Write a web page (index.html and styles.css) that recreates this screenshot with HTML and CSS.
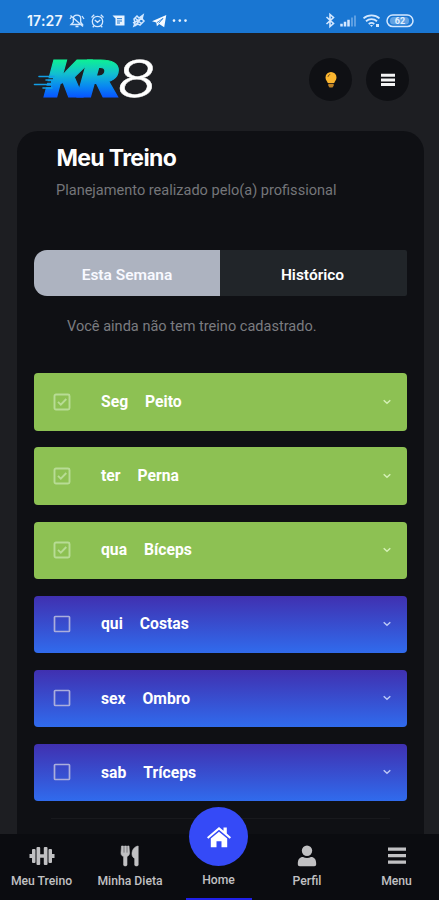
FILE: index.html
```html
<!DOCTYPE html>
<html lang="pt-BR">
<head>
<meta charset="utf-8">
<meta name="viewport" content="width=device-width, initial-scale=1">
<title>Meu Treino</title>
<link rel="stylesheet" href="styles.css">
</head>
<body>
<svg class="defs" width="0" height="0" aria-hidden="true">
  <symbol id="checked" viewBox="0 0 18 18"><rect x="1.5" y="1.5" width="15" height="15" rx="1.5" fill="none" stroke="currentColor" stroke-width="1.9"/><path d="M5 8.8l2.8 2.8L13.3 6" fill="none" stroke="currentColor" stroke-width="1.9"/></symbol>
  <symbol id="unchecked" viewBox="0 0 18 18"><rect x="1.5" y="1.5" width="15" height="15" rx=".8" fill="none" stroke="currentColor" stroke-width="1.7"/></symbol>
  <symbol id="chevron" viewBox="0 0 10 8"><path d="M1.7 2.2L5 5.2l3.3-3" fill="none" stroke="currentColor" stroke-width="1.5"/></symbol>
</svg>
<header class="status">
  <span class="time">17:27</span>
  <svg class="status-left" width="122" height="18" viewBox="68 12 122 18" fill="none" stroke="#d4e8ff" stroke-width="1.3">
    <path d="M71 24.5h11.5l-1.8-2.3v-3.5c0-2.1-1.4-3.5-3.7-3.5s-3.7 1.4-3.7 3.5v3.5zM75.5 26.5h3M70.5 15.5l12.5 11M70 19l2-3M84 19l-2-3"/>
    <circle cx="97.5" cy="21.5" r="5.2"/><path d="M94.8 20l2.7 2.3 2.8-2.3M91.5 17.5l2.7-2.7M103.5 17.5l-2.7-2.7M94 26l-1.3 1.2M101 26l1.3 1.2"/>
    <path d="M112.5 15.5h12v10h-9v-7z" fill="#e9f4ff" stroke="none"/><path d="M117 18.7h5M117 21h5M117 23h3" stroke="#1976d2" stroke-width="1"/>
    <path d="M134 19l3-3 2 2 4-3-1 4 2 2-4 4-2-1-4 2 1-3zM133 23l10-5M135 26l7-9M135 18l7 6" stroke-width="1.5"/>
    <path d="M152 21.2L166.3 15l-2.1 12.3-5-3.3-2.3 2.3-.6-3.8z" fill="#f5faff" stroke="none"/><path d="M157 22.6l6-4.2-4.3 5" stroke="#1976d2" stroke-width=".8"/>
    <g fill="#e9f4ff" stroke="none"><circle cx="174" cy="20.6" r="1.3"/><circle cx="179.8" cy="20.6" r="1.3"/><circle cx="185.5" cy="20.6" r="1.3"/></g>
  </svg>
  <svg class="status-right" width="92" height="18" viewBox="324 12 92 18" fill="none" stroke="#d4e8ff">
    <path d="M326.5 17l7 6.5-3.5 3V14.5l3.5 3-7 6.5" stroke-width="1.6"/>
    <path d="M341.5 26.5v-2.8M345 26.5v-4.8M348.5 26.5v-6.8" stroke-width="2.5"/><path d="M352 26.5v-9M355 26.5v-11" stroke-width="1.8" opacity=".4"/>
    <path d="M363.5 18.3c4.5-4 11.5-4 16 0M366 21.3c3.2-2.8 7.8-2.8 11 0M368.7 23.9c1.8-1.3 3.8-1.3 5.6 0" stroke-width="1.8"/><path d="M370 25h3l-1.5 2zM376 24h3v3h-3z" fill="#d4e8ff" stroke="none"/>
    <rect x="387" y="15" width="26" height="11.6" rx="5.8" stroke-width="1.5"/><rect x="390" y="17" width="19" height="7.6" rx="3.5" fill="#a9cdf3" stroke="none" opacity=".5"/>
    <text x="400" y="24.3" text-anchor="middle" class="battery">62</text>
  </svg>
</header>
<div class="brand-bar">
  <svg class="logo" width="122" height="50" viewBox="33 52 122 50" role="img" aria-label="KR8">
    <defs><linearGradient id="brand" gradientUnits="userSpaceOnUse" x1="0" y1="-38" x2="0" y2="0"><stop offset="0" stop-color="#0df58f"/><stop offset=".4" stop-color="#12bfd0"/><stop offset=".72" stop-color="#098af0"/><stop offset="1" stop-color="#0758ff"/></linearGradient></defs>
    <text class="logo-kr" transform="translate(43 96.5)" textLength="44" lengthAdjust="spacingAndGlyphs" fill="url(#brand)" stroke="url(#brand)">K</text>
    <text class="logo-kr" transform="translate(76 96.5)" textLength="45" lengthAdjust="spacingAndGlyphs" fill="url(#brand)" stroke="url(#brand)">R</text>
    <text class="logo-eight" transform="translate(114.5 96.5) skewX(-8)" textLength="40" lengthAdjust="spacingAndGlyphs">8</text>
    <path d="M42 79h11M41 82h10M37 86.500h14" stroke="#1d1e22" stroke-width="1.700"/><path d="M39 76.500h15M46 80h8M34.500 84.500h17M43 88h9" stroke="#139ee5" stroke-width="1.600" stroke-linecap="round"/>
  </svg>
  <div class="actions">
    <button class="round" aria-label="Tema"><svg width="14" height="18" viewBox="0 0 14 18"><path d="M7 1a5.500 5.500 0 0 0-5.500 5.500c0 2.500 1.700 3.500 2.300 5.500h6.400c.6-2 2.300-3 2.300-5.500A5.500 5.500 0 0 0 7 1z" fill="#fcb62f"/><path d="M4 5.800C4.200 4.500 5 3.700 6.200 3.500" fill="none" stroke="#684718"/><path d="M4.300 12.800h5.400v2L8.500 16.500h-3l-1.200-1.700z" fill="#bc8127"/></svg></button>
    <button class="round" aria-label="Menu"><svg width="16" height="14" viewBox="0 0 16 14"><path d="M1 2.200h14M1 6.900h14M1 11.600h14" stroke="#f4f4f4" stroke-width="3"/></svg></button>
  </div>
</div>
<main class="card">
  <h1>Meu Treino</h1>
  <p class="subtitle">Planejamento realizado pelo(a) profissional</p>
  <div class="tabs"><button class="tab active">Esta Semana</button><button class="tab">Histórico</button></div>
  <p class="empty">Você ainda não tem treino cadastrado.</p>
  <div class="days">
    <div class="day done"><svg class="box"><use href="#checked"/></svg><span class="weekday">Seg</span><span>Peito</span><svg class="chevron"><use href="#chevron"/></svg></div>
    <div class="day done"><svg class="box"><use href="#checked"/></svg><span class="weekday">ter</span><span>Perna</span><svg class="chevron"><use href="#chevron"/></svg></div>
    <div class="day done"><svg class="box"><use href="#checked"/></svg><span class="weekday">qua</span><span>Bíceps</span><svg class="chevron"><use href="#chevron"/></svg></div>
    <div class="day"><svg class="box"><use href="#unchecked"/></svg><span class="weekday">qui</span><span>Costas</span><svg class="chevron"><use href="#chevron"/></svg></div>
    <div class="day"><svg class="box"><use href="#unchecked"/></svg><span class="weekday">sex</span><span>Ombro</span><svg class="chevron"><use href="#chevron"/></svg></div>
    <div class="day"><svg class="box"><use href="#unchecked"/></svg><span class="weekday">sab</span><span>Tríceps</span><svg class="chevron"><use href="#chevron"/></svg></div>
  </div>
  <div class="divider"></div>
</main>
<nav class="nav">
  <a class="item"><svg width="26" height="22" viewBox="0 0 26 22"><path d="M7.500 3q0-1 1-1h1.700q1 0 1 1v6.200h3.600V3q0-1 1-1h1.700q1 0 1 1v16q0 1-1 1h-1.700q-1 0-1-1v-6.200h-3.600V19q0 1-1 1H8.500q-1 0-1-1zM3 5q0-1 1-1h1.500q1 0 1 1v12q0 1-1 1H4q-1 0-1-1zM19.500 5q0-1 1-1H22q1 0 1 1v12q0 1-1 1h-1.500q-1 0-1-1zM.5 9H3v4H.5zM23 9h2.500v4H23z" fill="currentColor"/></svg><span>Meu Treino</span></a>
  <a class="item"><svg width="20" height="22" viewBox="0 0 20 22"><path d="M1.500 1L1 8c0 2 1 3 2.600 3.500V20c0 1.300 3.400 1.300 3.400 0v-8.500C8.500 11 9.500 10 9.500 8L9 1H7.500v6.500h-1V1h-2v6.500h-1V1zM18.200 1c-4 .5-6.200 4-6.200 8 0 2 1 3.500 2.700 4.500V20c0 1.300 3.500 1.300 3.500 0z" fill="currentColor" stroke="currentColor" stroke-width=".6"/></svg><span>Minha Dieta</span></a>
  <a class="item home"><span class="bubble"><svg width="26" height="24" viewBox="0 0 26 24"><path d="M1 12.200L13 2l4.500 3.800V2.500h3.300v6.100L25 12.200l-1.300 1.600L13 4.800 2.300 13.800z" fill="#fff"/><path d="M4.800 13.600L13 6.800l8.200 6.800v8.700h-5.700v-6h-5v6H4.800z" fill="#fff"/></svg></span><span>Home</span></a>
  <a class="item"><svg width="20" height="22" viewBox="0 0 20 22"><circle cx="10" cy="5.700" r="5.200" fill="currentColor"/><path d="M.8 19c0-5 2-7 5.200-7 2.300 1.300 5.700 1.300 8 0 3.200 0 5.200 2 5.200 7 0 1.500-.7 2.200-2 2.200H2.800c-1.300 0-2-.7-2-2.200z" fill="currentColor"/></svg><span>Perfil</span></a>
  <a class="item"><svg width="20" height="22" viewBox="0 0 20 22"><path d="M1 4.200h18M1 10.700h18M1 17.200h18" stroke="currentColor" stroke-width="3.300"/></svg><span>Menu</span></a>
</nav>
</body>
</html>
```
FILE: styles.css
```css
* { box-sizing: border-box; }
body { margin: 0; height: 900px; overflow: hidden; display: flex; flex-direction: column; background: #1d1e22; color: #fff; font-family: Roboto, sans-serif; }
svg { display: block; flex-shrink: 0; }
.defs { position: absolute; }
button { border: 0; padding: 0; color: inherit; font: inherit; }
.status { height: 33px; flex: none; display: flex; align-items: flex-start; background: #1976d2; padding: 12px 23px 0 27px; }
.time { width: 41px; font: 600 14px/18px Inter, sans-serif; letter-spacing: .2px; color: #edf6ff; }
.status-right { margin-left: auto; }
.battery { font: 700 9px Roboto, sans-serif; fill: #e3f1ff; stroke: none; }
.brand-bar { height: 98px; flex: none; display: flex; justify-content: space-between; padding: 19px 30px 0 33px; }
.logo { overflow: visible; }
.logo-kr { font: italic 800 51px "Open Sans", sans-serif; stroke-width: 1; }
.logo-eight { font: 300 51px Inter, sans-serif; fill: #fff; stroke: #fff; stroke-width: .4; }
.actions { display: flex; gap: 14px; padding-top: 6px; }
.round { width: 43px; height: 43px; border-radius: 50%; background: #0f1014; display: flex; align-items: center; justify-content: center; }
.card { flex: 1; min-height: 0; margin: 0 15px 0 17px; border-radius: 21px 21px 0 0; background: #0f1014; padding: 13px 17px 0; }
h1 { margin: 0 0 0 22.5px; font: 700 23px/28px Inter, sans-serif; letter-spacing: -.65px; }
.subtitle { margin: 10px 0 0 22px; font-size: 14.55px; line-height: 18px; color: #75767a; white-space: nowrap; }
.tabs { display: flex; height: 46px; margin-top: 50px; border-radius: 13px 2px 2px 13px; overflow: hidden; }
.tab { flex: 1; background: #212529; font-weight: 600; font-size: 15.5px; padding: 3px 2px 0 0; }
.tab.active { flex: 0 0 186px; padding-right: 0; background: #adb3c0; color: #f8f9ff; }
.empty { margin: 22px 0 0 33px; font-size: 14.55px; line-height: 18px; color: #7b7c80; white-space: nowrap; }
.days { display: flex; flex-direction: column; gap: 16.6px; margin-top: 37.4px; }
.day { height: 57.5px; display: flex; align-items: center; border-radius: 4px; padding: 0 15px 1px 19px; background: linear-gradient(#4030b0, #306bed); font-weight: 700; font-size: 15.7px; }
.day.done { background: #8dc153; }
.box { width: 18px; height: 18px; color: #abaedc; margin-right: 30px; }
.done .box { color: #b8dc95; }
.weekday { margin-right: 17px; }
.chevron { width: 10px; height: 8px; margin-left: auto; color: #bbc8f6; }
.done .chevron { color: #d4f0b6; }
.divider { height: 1px; margin: 17px 17px 0; background: #18191d; }
.nav { height: 66px; flex: none; display: grid; grid-template-columns: 83px 94px 83px 94px 85px; background: #0b0c10; color: #c1c1c3; }
.item { display: flex; flex-direction: column; align-items: center; padding-top: 11px; font-size: 12.2px; font-weight: 500; line-height: 14px; white-space: nowrap; }
.item > span:last-child { margin-top: 7px; }
.nav .home { width: 66px; justify-self: center; padding-top: 0; margin-top: -27px; border-bottom: 2px solid #2020e8; }
.home > span:last-child { margin-top: 7px; }
.bubble { width: 59px; height: 59px; border-radius: 50%; background: #354af7; display: flex; align-items: center; justify-content: center; }
```
